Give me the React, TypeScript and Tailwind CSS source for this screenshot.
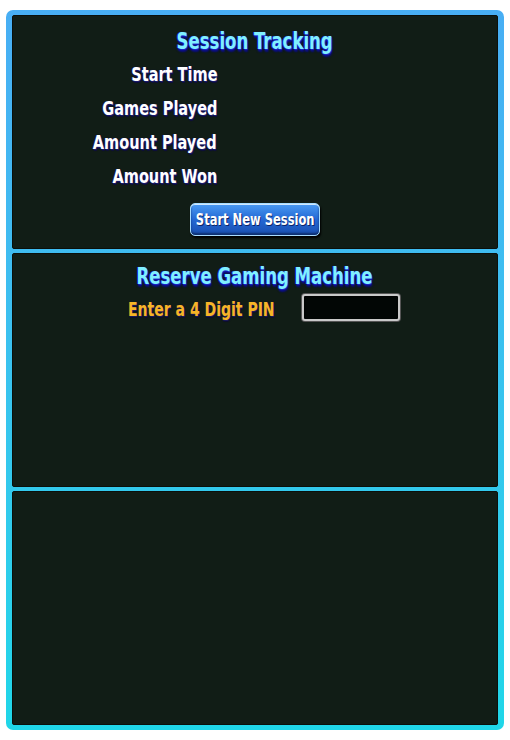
const FONT = "font-['DejaVu_Sans_Condensed','Liberation_Sans',sans-serif] font-bold";

const TITLE_FX =
  "text-[#80f0ff] [text-shadow:0_0_1px_#1a22c8,1px_1px_0_#1a22c8,-1px_0_0_#1a22c8,0_2px_2px_#0d1190,1px_3px_2px_#0a0d70]";
const LABEL_FX =
  "text-white [text-shadow:0_0_1px_#14145a,1px_1px_0_#1b1b6e,-1px_0_0_#14145a,1px_2px_1px_#0d0d40]";
const PIN_FX =
  "text-[#f7b526] [text-shadow:0_0_1px_#2a1a40,1px_1px_0_#1b1b5e,1px_2px_1px_#0d0d30]";

const STATS = ["Start Time", "Games Played", "Amount Played", "Amount Won"];

function Panel({ children }: { children?: React.ReactNode }) {
  return (
    <div className="flex-1 rounded-[2px] border border-[#0a100c] bg-[#111d16]">
      {children}
    </div>
  );
}

export default function App() {
  return (
    <div className="h-[740px] w-[510px] bg-white px-[6px] pb-[10px] pt-[10px]">
      <div className="flex h-[720px] w-[498px] flex-col gap-[4px] rounded-[7px] bg-gradient-to-b from-[#48aef4] to-[#1fd6e8] p-[5px] px-[6px]">
        <Panel>
          <div className={`${FONT} flex flex-col items-center pt-[11px]`}>
            <h1 className={`scale-x-[0.8] whitespace-nowrap text-[23px] leading-[28px] ${TITLE_FX}`}>
              Session Tracking
            </h1>
            <div className="mt-[8px] grid w-full grid-cols-[204px_1fr] gap-y-[11px]">
              {STATS.map((s) => (
                <div key={s} className="col-start-1 flex justify-end">
                  <span
                    className={`origin-right scale-x-[0.85] whitespace-nowrap text-[19px] leading-[23px] ${LABEL_FX}`}
                  >
                    {s}
                  </span>
                </div>
              ))}
            </div>
            <button className="mt-[15px] flex h-[33px] w-[130px] items-center justify-center rounded-[5px] border border-[#a8dcff] bg-gradient-to-b from-[#4a9af2] via-[#2468d4] to-[#1a4fb0] shadow-[inset_0_1px_0_#cfe8ff,inset_0_-2px_2px_#0d2f70,1px_2px_2px_#000]">
              <span className="scale-x-[0.8] whitespace-nowrap text-[16px] leading-[20px] text-white [text-shadow:1px_1px_0_#0b2366]">
                Start New Session
              </span>
            </button>
          </div>
        </Panel>
        <Panel>
          <div className={`${FONT} flex flex-col items-center pt-[8px]`}>
            <h2 className={`scale-x-[0.8] whitespace-nowrap text-[23px] leading-[28px] ${TITLE_FX}`}>
              Reserve Gaming Machine
            </h2>
            <div className="mt-[4px] flex w-full items-center gap-[28px] pl-[115px]">
              <div className="w-[146px]">
                <span
                  className={`inline-block origin-left scale-x-[0.82] whitespace-nowrap text-[19px] leading-[23px] ${PIN_FX}`}
                >
                  Enter a 4 Digit PIN
                </span>
              </div>
              <div className="mb-[5px] h-[27px] w-[98px] rounded-[3px] border-2 border-[#c9c9c9] bg-[#020605] shadow-[inset_0_1px_2px_#000,0_0_0_1px_#555]" />
            </div>
          </div>
        </Panel>
        <Panel />
      </div>
    </div>
  );
}
